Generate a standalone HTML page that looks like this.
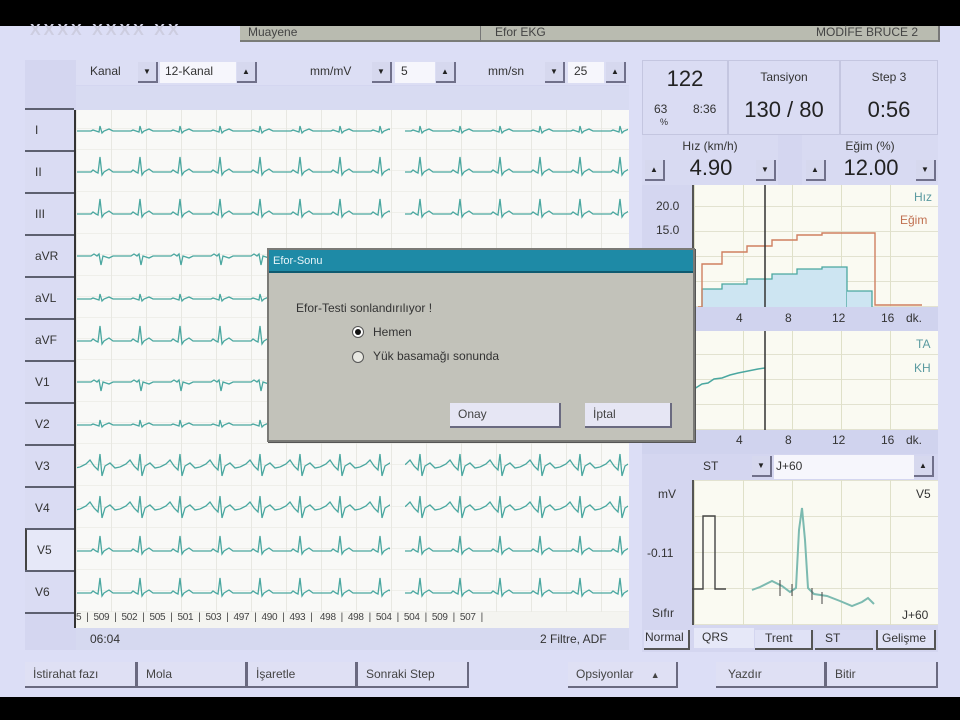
<!DOCTYPE html>
<html><head><meta charset="utf-8"><style>
*{margin:0;padding:0;box-sizing:border-box}
body{width:960px;height:720px;background:#000;position:relative;overflow:hidden;font-family:"Liberation Sans",sans-serif;font-size:12px;color:#333}
.a{position:absolute}
.btn{position:absolute;background:#dfe0f4;border-right:2px solid #6a6a80;border-bottom:2px solid #6a6a80;color:#444;font-size:12px;padding-left:8px;line-height:24px}
.arr{position:absolute;width:20px;height:21px;background:#d6d8ee;border-right:2px solid #70708a;border-bottom:2px solid #70708a;font-size:8px;text-align:center;line-height:20px;color:#222}
.lbl{position:absolute;left:25px;width:49px;height:42px;background:#dadcf3;border-top:2px solid #5d6070;color:#333;font-size:12px;line-height:40px;padding-left:10px}
.c{text-align:center}
</style></head><body>
<div class="a" style="left:0;top:26px;width:960px;height:671px;background:#dcdef6"></div>
<div class="a" style="left:30px;top:22px;width:180px;height:14px;color:#cdcde0;font-size:16px;font-weight:bold;letter-spacing:3px">XXXX XXXX XX</div>
<div class="a" style="left:240px;top:26px;width:700px;height:16px;background:#b9bbb0;border-bottom:2px solid #7a7c78"></div>
<div class="a" style="left:480px;top:26px;width:1px;height:16px;background:#777"></div>
<div class="a" style="left:248px;top:26px;font-size:12px;color:#444;line-height:12px">Muayene</div>
<div class="a" style="left:495px;top:26px;font-size:12px;color:#444;line-height:12px">Efor EKG</div>
<div class="a" style="left:816px;top:26px;font-size:12px;color:#444;line-height:12px">MODİFE BRUCE 2</div>
<div class="a" style="left:938px;top:26px;width:2px;height:16px;background:#777"></div>

<!-- ECG panel -->
<div class="a" style="left:25px;top:60px;width:604px;height:590px;background:#d4d6f0"></div>
<div class="a" style="left:76px;top:60px;width:553px;height:25px;background:#dcdef4"></div>
<div class="a" style="left:90px;top:64px;font-size:12px">Kanal</div>
<div class="arr" style="left:138px;top:62px">▼</div>
<div class="a" style="left:160px;top:62px;width:76px;height:21px;background:#f6f6fc;padding:2px 5px">12-Kanal</div>
<div class="arr" style="left:237px;top:62px">▲</div>
<div class="a" style="left:310px;top:64px">mm/mV</div>
<div class="arr" style="left:372px;top:62px">▼</div>
<div class="a" style="left:395px;top:62px;width:40px;height:21px;background:#f6f6fc;padding:2px 6px">5</div>
<div class="arr" style="left:436px;top:62px">▲</div>
<div class="a" style="left:488px;top:64px">mm/sn</div>
<div class="arr" style="left:545px;top:62px">▼</div>
<div class="a" style="left:568px;top:62px;width:36px;height:21px;background:#f6f6fc;padding:2px 6px">25</div>
<div class="arr" style="left:606px;top:62px">▲</div>
<div class="a" style="left:76px;top:86px;width:553px;height:24px;background:#d8dbf2"></div>

<div class="a" style="left:74px;top:110px;width:555px;height:502px;background-color:#f9f9f7;background-image:repeating-linear-gradient(90deg,#e8e8e2 0 1px,transparent 1px 35px),repeating-linear-gradient(0deg,#efefea 0 1px,transparent 1px 21px);border-left:2px solid #333"></div>
<div class="a" style="left:74px;top:612px;width:555px;height:16px;background:#f4f4f0;border-left:2px solid #333"></div>

<svg class="a" style="left:0;top:0" width="960" height="720">
<defs>
<pattern id="pu" patternUnits="userSpaceOnUse" width="40" height="40"><path d="M0,25 L11,25 L13,23 L16,25 L18,26 L20,10 L22,28 L24,25 L29,22 L33,25 L40,25" fill="none" stroke="#4aa7a0" stroke-width="1.3"/></pattern>
<pattern id="ps" patternUnits="userSpaceOnUse" width="40" height="40"><path d="M0,25 L11,25 L13,24 L16,25 L19,26 L20,20 L22,27 L24,25 L29,23 L33,25 L40,25" fill="none" stroke="#4aa7a0" stroke-width="1.3"/></pattern>
<pattern id="pd" patternUnits="userSpaceOnUse" width="40" height="40"><path d="M0,24 L11,24 L14,22 L17,24 L19,22 L21,33 L23,24 L29,26 L33,24 L40,24" fill="none" stroke="#4aa7a0" stroke-width="1.3"/></pattern>
<pattern id="pw" patternUnits="userSpaceOnUse" width="40" height="40"><path d="M0,25 L6,22 L10,18 L14,24 L18,28 L20,12 L22,34 L25,24 L30,21 L35,26 L40,25" fill="none" stroke="#4aa7a0" stroke-width="1.3"/></pattern>
<g id="rows"></g>
</defs>
<g transform="translate(0,106)"><rect x="77" y="0" width="313" height="40" fill="url(#ps)"/><rect x="405" y="0" width="223" height="40" fill="url(#ps)"/></g>
<g transform="translate(0,147)"><rect x="77" y="0" width="313" height="40" fill="url(#pu)"/><rect x="405" y="0" width="223" height="40" fill="url(#pu)"/></g>
<g transform="translate(0,189)"><rect x="77" y="0" width="313" height="40" fill="url(#pu)"/><rect x="405" y="0" width="223" height="40" fill="url(#pu)"/></g>
<g transform="translate(0,232)"><rect x="77" y="0" width="313" height="40" fill="url(#pd)"/><rect x="405" y="0" width="223" height="40" fill="url(#pd)"/></g>
<g transform="translate(0,274)"><rect x="77" y="0" width="313" height="40" fill="url(#ps)"/><rect x="405" y="0" width="223" height="40" fill="url(#ps)"/></g>
<g transform="translate(0,316)"><rect x="77" y="0" width="313" height="40" fill="url(#pu)"/><rect x="405" y="0" width="223" height="40" fill="url(#pu)"/></g>
<g transform="translate(0,358)"><rect x="77" y="0" width="313" height="40" fill="url(#pd)"/><rect x="405" y="0" width="223" height="40" fill="url(#pd)"/></g>
<g transform="translate(0,400)"><rect x="77" y="0" width="313" height="40" fill="url(#ps)"/><rect x="405" y="0" width="223" height="40" fill="url(#ps)"/></g>
<g transform="translate(0,442)"><rect x="77" y="0" width="313" height="40" fill="url(#pw)"/><rect x="405" y="0" width="223" height="40" fill="url(#pw)"/></g>
<g transform="translate(0,484)"><rect x="77" y="0" width="313" height="40" fill="url(#pw)"/><rect x="405" y="0" width="223" height="40" fill="url(#pw)"/></g>
<g transform="translate(0,526)"><rect x="77" y="0" width="313" height="40" fill="url(#pu)"/><rect x="405" y="0" width="223" height="40" fill="url(#pu)"/></g>
<g transform="translate(0,568)"><rect x="77" y="0" width="313" height="40" fill="url(#pu)"/><rect x="405" y="0" width="223" height="40" fill="url(#pu)"/></g>
</svg>

<div class="lbl" style="top:108px">I</div>
<div class="lbl" style="top:150px">II</div>
<div class="lbl" style="top:192px">III</div>
<div class="lbl" style="top:234px">aVR</div>
<div class="lbl" style="top:276px">aVL</div>
<div class="lbl" style="top:318px">aVF</div>
<div class="lbl" style="top:360px">V1</div>
<div class="lbl" style="top:402px">V2</div>
<div class="lbl" style="top:444px">V3</div>
<div class="lbl" style="top:486px">V4</div>
<div class="lbl" style="top:528px;background:#e6e8f8;border-left:2px solid #444">V5</div>
<div class="lbl" style="top:570px">V6</div>
<div class="a" style="left:25px;top:612px;width:49px;height:2px;background:#5d6070"></div>
<div class="a" style="left:76px;top:612px;font-size:10px;color:#444;white-space:pre;letter-spacing:-0.3px">5  |  509  |  502  |  505  |  501  |  503  |  497  |  490  |  493  |   498  |  498  |  504  |  504  |  509  |  507  |</div>
<div class="a" style="left:76px;top:628px;width:553px;height:22px;background:#d6d9f0"></div>
<div class="a" style="left:90px;top:632px">06:04</div>
<div class="a" style="left:540px;top:632px">2 Filtre, ADF</div>

<!-- Right panel -->
<div class="a" style="left:642px;top:60px;width:296px;height:590px;background:#d4d6f0"></div>
<div class="a" style="left:642px;top:60px;width:86px;height:75px;background:#dadcf3;border:1px solid #c4c6e0"></div>
<div class="a" style="left:728px;top:60px;width:112px;height:75px;background:#dadcf3;border:1px solid #c4c6e0"></div>
<div class="a" style="left:840px;top:60px;width:98px;height:75px;background:#dadcf3;border:1px solid #c4c6e0"></div>
<div class="a c" style="left:642px;top:66px;width:86px;font-size:22px;color:#222">122</div>
<div class="a" style="left:654px;top:102px;font-size:12px">63</div>
<div class="a" style="left:693px;top:102px;font-size:12px">8:36</div>
<div class="a" style="left:660px;top:117px;font-size:9px">%</div>
<div class="a c" style="left:728px;top:70px;width:112px;font-size:12px">Tansiyon</div>
<div class="a c" style="left:728px;top:97px;width:112px;font-size:22px;color:#222">130 / 80</div>
<div class="a c" style="left:840px;top:70px;width:98px;font-size:12px">Step 3</div>
<div class="a c" style="left:840px;top:97px;width:98px;font-size:22px;color:#222">0:56</div>
<div class="a" style="left:642px;top:135px;width:136px;height:50px;background:#d8daf2"></div>
<div class="a" style="left:802px;top:135px;width:136px;height:50px;background:#d8daf2"></div>
<div class="a c" style="left:642px;top:139px;width:136px;font-size:12px">Hız (km/h)</div>
<div class="a c" style="left:802px;top:139px;width:136px;font-size:12px">Eğim (%)</div>
<div class="arr" style="left:645px;top:160px">▲</div>
<div class="a c" style="left:668px;top:155px;width:86px;font-size:22px;color:#222">4.90</div>
<div class="arr" style="left:756px;top:160px">▼</div>
<div class="arr" style="left:806px;top:160px">▲</div>
<div class="a c" style="left:828px;top:155px;width:86px;font-size:22px;color:#222">12.00</div>
<div class="arr" style="left:916px;top:160px">▼</div>

<div class="a" style="left:692px;top:185px;width:246px;height:122px;background-color:#fafaf2;background-image:repeating-linear-gradient(90deg,#dfe0c8 0 1px,transparent 1px 49px),repeating-linear-gradient(0deg,#e2e2d0 0 1px,transparent 1px 25px);border-left:2px solid #555"></div>
<div class="a" style="left:656px;top:199px;font-size:12px">20.0</div>
<div class="a" style="left:656px;top:223px;font-size:12px">15.0</div>
<div class="a" style="left:914px;top:190px;font-size:12px;color:#5a9aa0">Hız</div>
<div class="a" style="left:900px;top:213px;font-size:12px;color:#c07050">Eğim</div>
<svg class="a" style="left:692px;top:185px" width="246" height="122">
<path d="M10,122 L10,104 L30,104 L30,99 L55,99 L55,94 L80,94 L80,89 L105,89 L105,84 L130,84 L130,82 L155,82 L155,122 Z" fill="#cde5f2"/>
<path d="M10,122 L10,104 L30,104 L30,99 L55,99 L55,94 L80,94 L80,89 L105,89 L105,84 L130,84 L130,82 L155,82 L155,122" fill="none" stroke="#4aa7a0" stroke-width="1.3"/>
<path d="M155,122 L155,106 L180,106 L180,122 Z" fill="#cde5f2"/>
<path d="M155,106 L180,106 L180,122" fill="none" stroke="#4aa7a0" stroke-width="1.3"/>
<path d="M6,122 L10,122 L10,79 L30,79 L30,67 L55,67 L55,61 L80,61 L80,55 L105,55 L105,50 L130,50 L130,48 L183,48 L183,120 L230,120" fill="none" stroke="#d08060" stroke-width="1.4"/>
<line x1="73" y1="0" x2="73" y2="122" stroke="#333" stroke-width="1.5"/>
</svg>
<div class="a" style="left:642px;top:307px;width:296px;height:24px;background:#d0d3ee"></div>
<div class="a" style="left:736px;top:311px;font-size:12px">4</div>
<div class="a" style="left:785px;top:311px;font-size:12px">8</div>
<div class="a" style="left:832px;top:311px;font-size:12px">12</div>
<div class="a" style="left:881px;top:311px;font-size:12px">16</div>
<div class="a" style="left:906px;top:311px;font-size:12px">dk.</div>

<div class="a" style="left:692px;top:331px;width:246px;height:99px;background-color:#fafaf2;background-image:repeating-linear-gradient(90deg,#dfe0c8 0 1px,transparent 1px 49px),repeating-linear-gradient(0deg,#e2e2d0 0 1px,transparent 1px 25px);border-left:2px solid #555"></div>
<div class="a" style="left:916px;top:337px;font-size:12px;color:#5a9aa0">TA</div>
<div class="a" style="left:914px;top:361px;font-size:12px;color:#5a9aa0">KH</div>
<svg class="a" style="left:692px;top:331px" width="246" height="99">
<path d="M2,58 L10,53 L16,52 L22,48 L30,47 L38,44 L46,42 L56,40 L66,38 L73,37" fill="none" stroke="#4aa7a0" stroke-width="1.5"/>
<line x1="73" y1="0" x2="73" y2="99" stroke="#333" stroke-width="1.5"/>
</svg>
<div class="a" style="left:642px;top:430px;width:296px;height:24px;background:#d0d3ee"></div>
<div class="a" style="left:736px;top:433px;font-size:12px">4</div>
<div class="a" style="left:785px;top:433px;font-size:12px">8</div>
<div class="a" style="left:832px;top:433px;font-size:12px">12</div>
<div class="a" style="left:881px;top:433px;font-size:12px">16</div>
<div class="a" style="left:906px;top:433px;font-size:12px">dk.</div>

<div class="a" style="left:692px;top:455px;width:58px;height:24px;background:#d4d6f0"></div>
<div class="a" style="left:703px;top:459px">ST</div>
<div class="arr" style="left:752px;top:456px">▼</div>
<div class="a" style="left:774px;top:455px;width:140px;height:24px;background:#f6f6fc;padding:4px 2px">J+60</div>
<div class="arr" style="left:914px;top:456px">▲</div>
<div class="a" style="left:692px;top:480px;width:246px;height:145px;background-color:#fafaf2;background-image:repeating-linear-gradient(90deg,#dfe0c8 0 1px,transparent 1px 49px),repeating-linear-gradient(0deg,#e2e2d0 0 1px,transparent 1px 36px);border-left:2px solid #555"></div>
<div class="a" style="left:658px;top:487px">mV</div>
<div class="a" style="left:647px;top:546px">-0.11</div>
<div class="a" style="left:652px;top:606px">Sıfır</div>
<div class="a" style="left:916px;top:487px">V5</div>
<div class="a" style="left:902px;top:608px">J+60</div>
<svg class="a" style="left:692px;top:480px" width="246" height="145">
<path d="M0,109 L11,109 L11,36 L23,36 L23,109 L34,109" fill="none" stroke="#444" stroke-width="1.4"/>
<path d="M60,110 L68,107 L80,101 L90,106 L98,112 L104,108 L107,50 L110,28 L113,60 L116,108 L122,114 L135,116 L148,121 L160,126 L170,122 L176,118 L182,124" fill="none" stroke="#7cbab0" stroke-width="2"/>
<path d="M88,100 L88,116 M100,104 L100,116 M120,108 L120,120 M130,112 L130,124" stroke="#444" stroke-width="1"/>
</svg>
<div class="a" style="left:642px;top:628px;width:296px;height:24px;background:#d4d6f0"></div>
<div class="a" style="left:644px;top:630px;width:46px;height:20px;background:#e0e2f6;border-right:2px solid #555;border-bottom:2px solid #555;font-size:12px;padding-left:1px">Normal</div>
<div class="a" style="left:694px;top:628px;width:60px;height:20px;background:#e6e8f8;padding:2px 8px">QRS</div>
<div class="a" style="left:755px;top:630px;width:58px;height:20px;background:#e0e2f6;border-right:2px solid #555;border-bottom:2px solid #555;padding:1px 10px">Trent</div>
<div class="a" style="left:815px;top:630px;width:58px;height:20px;background:#d8daf2;border-bottom:2px solid #555;padding:1px 10px">ST</div>
<div class="a" style="left:876px;top:630px;width:60px;height:20px;background:#e0e2f6;border-left:2px solid #555;border-right:2px solid #555;border-bottom:2px solid #555;padding:1px 4px">Gelişme</div>

<!-- bottom buttons -->
<div class="btn" style="left:25px;top:662px;width:112px;height:26px">İstirahat fazı</div>
<div class="btn" style="left:137px;top:662px;width:110px;height:26px;border-left:1px solid #6a6a80">Mola</div>
<div class="btn" style="left:247px;top:662px;width:110px;height:26px;border-left:1px solid #6a6a80">İşaretle</div>
<div class="btn" style="left:357px;top:662px;width:112px;height:26px;border-left:1px solid #6a6a80">Sonraki Step</div>
<div class="btn" style="left:568px;top:662px;width:110px;height:26px">Opsiyonlar <span style="margin-left:14px;font-size:9px">▲</span></div>
<div class="btn" style="left:716px;top:662px;width:110px;height:26px;padding-left:12px">Yazdır</div>
<div class="btn" style="left:826px;top:662px;width:112px;height:26px;border-left:1px solid #6a6a80">Bitir</div>

<!-- dialog -->
<div class="a" style="left:267px;top:248px;width:428px;height:194px;background:#c2c2ba;border:2px solid #7a7a76;box-shadow:1px 1px 0 #555"></div>
<div class="a" style="left:269px;top:250px;width:424px;height:23px;background:#1e8aa6;border-bottom:2px solid #0f5a70;color:#e8f4f8;font-size:11px;line-height:22px;padding-left:4px">Efor-Sonu</div>
<div class="a" style="left:296px;top:301px;font-size:12px;color:#333">Efor-Testi sonlandırılıyor !</div>
<div class="a" style="left:352px;top:326px;width:12px;height:12px;border-radius:50%;background:#fff;border:1px solid #555"><div style="margin:2px;width:6px;height:6px;border-radius:50%;background:#111"></div></div>
<div class="a" style="left:373px;top:325px;font-size:12px">Hemen</div>
<div class="a" style="left:352px;top:351px;width:12px;height:12px;border-radius:50%;background:#e8e8e2;border:1px solid #555"></div>
<div class="a" style="left:373px;top:349px;font-size:12px">Yük basamağı sonunda</div>
<div class="btn" style="left:450px;top:403px;width:111px;height:25px;line-height:23px;background:#e6e6f4">Onay</div>
<div class="btn" style="left:585px;top:403px;width:87px;height:25px;line-height:23px;background:#e6e6f4">İptal</div>
</body></html>
